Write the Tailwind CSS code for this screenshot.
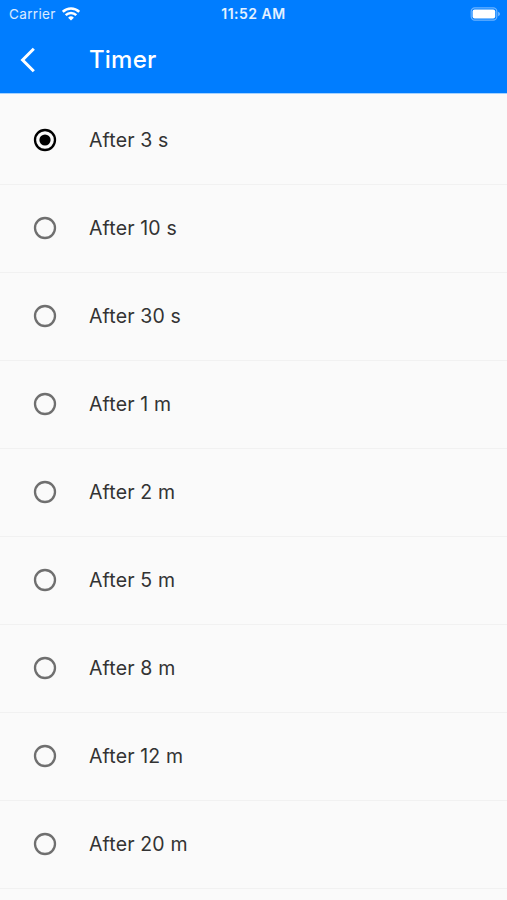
<!DOCTYPE html>
<html lang="en">
<head>
<meta charset="utf-8">
<title>Timer</title>
<script src="https://cdn.jsdelivr.net/npm/@tailwindcss/browser@4"></script>
</head>
<body class="h-[900px] w-[507px] overflow-hidden bg-[#fafafa] font-['Inter',sans-serif]">
<header class="h-[94px] bg-[#007dff] text-white border-b border-[#a5d2ff]">
  <div class="grid h-[27px] grid-cols-3 items-center pl-[9px] pr-[7px]">
    <div class="flex items-center gap-[6px]">
      <span class="pt-px text-[13.5px] leading-[26px] tracking-[0.35px] text-white/85">Carrier</span>
      <svg class="h-[14px] w-[18px]" viewBox="0 0 18 14" fill="none" stroke="white" stroke-width="2.5"><path d="M.8 4.8a11.8 11.8 0 0 1 16.4 0M3.7 8.2a7.6 7.6 0 0 1 10.6 0"/><path d="M9 13.6 6.1 10.7a4.2 4.2 0 0 1 5.8 0Z" fill="white" stroke="none"/></svg>
    </div>
    <span class="pr-[2px] pt-px text-center text-[14px] font-semibold leading-[26px] tracking-[0.5px] text-white/90">11:52 AM</span>
    <svg class="h-[14px] w-[30px] justify-self-end" viewBox="0 0 30 14"><rect x="1.2" y=".8" width="25.6" height="12.4" rx="3.6" fill="none" stroke="white" stroke-opacity=".42" stroke-width="1.2"/><rect x="2.6" y="2.4" width="22.6" height="9.2" rx="2" fill="white"/><path d="M28.2 4.8c2.2.9 2.2 3.5 0 4.4Z" fill="white" fill-opacity=".5"/></svg>
  </div>
  <div class="flex h-[66px] items-center pl-[20px]">
    <svg class="h-[26px] w-[16px]" viewBox="0 0 16 26" fill="none" stroke="white" stroke-width="3"><path d="M13.8 1.8 2.6 13l11.2 11.2"/></svg>
    <h1 class="ml-[53px] text-[24px] font-medium tracking-[0.2px]">Timer</h1>
  </div>
</header>
<main class="pt-[2px] text-[19.5px] tracking-[0.15px] text-[#333]">
  <div class="flex h-[89px] items-center border-b border-[#f1f1f1] pl-[33px]"><svg class="h-[24px] w-[24px]" viewBox="0 0 24 24"><circle cx="12" cy="12" r="10" fill="none" stroke="black" stroke-width="2.3"/><circle cx="12" cy="12" r="5.6" fill="black"/></svg><span class="ml-[32px] pt-[2px]">After 3 s</span></div>
  <div class="flex h-[88px] items-center border-b border-[#f1f1f1] pb-px pl-[33px]"><svg class="h-[24px] w-[24px]" viewBox="0 0 24 24"><circle cx="12" cy="12" r="10" fill="none" stroke="#6f6f6f" stroke-width="2.3"/></svg><span class="ml-[32px] pt-[2px]">After 10 s</span></div>
  <div class="flex h-[88px] items-center border-b border-[#f1f1f1] pb-px pl-[33px]"><svg class="h-[24px] w-[24px]" viewBox="0 0 24 24"><circle cx="12" cy="12" r="10" fill="none" stroke="#6f6f6f" stroke-width="2.3"/></svg><span class="ml-[32px] pt-[2px]">After 30 s</span></div>
  <div class="flex h-[88px] items-center border-b border-[#f1f1f1] pb-px pl-[33px]"><svg class="h-[24px] w-[24px]" viewBox="0 0 24 24"><circle cx="12" cy="12" r="10" fill="none" stroke="#6f6f6f" stroke-width="2.3"/></svg><span class="ml-[32px] pt-[2px]">After 1 m</span></div>
  <div class="flex h-[88px] items-center border-b border-[#f1f1f1] pb-px pl-[33px]"><svg class="h-[24px] w-[24px]" viewBox="0 0 24 24"><circle cx="12" cy="12" r="10" fill="none" stroke="#6f6f6f" stroke-width="2.3"/></svg><span class="ml-[32px] pt-[2px]">After 2 m</span></div>
  <div class="flex h-[88px] items-center border-b border-[#f1f1f1] pb-px pl-[33px]"><svg class="h-[24px] w-[24px]" viewBox="0 0 24 24"><circle cx="12" cy="12" r="10" fill="none" stroke="#6f6f6f" stroke-width="2.3"/></svg><span class="ml-[32px] pt-[2px]">After 5 m</span></div>
  <div class="flex h-[88px] items-center border-b border-[#f1f1f1] pb-px pl-[33px]"><svg class="h-[24px] w-[24px]" viewBox="0 0 24 24"><circle cx="12" cy="12" r="10" fill="none" stroke="#6f6f6f" stroke-width="2.3"/></svg><span class="ml-[32px] pt-[2px]">After 8 m</span></div>
  <div class="flex h-[88px] items-center border-b border-[#f1f1f1] pb-px pl-[33px]"><svg class="h-[24px] w-[24px]" viewBox="0 0 24 24"><circle cx="12" cy="12" r="10" fill="none" stroke="#6f6f6f" stroke-width="2.3"/></svg><span class="ml-[32px] pt-[2px]">After 12 m</span></div>
  <div class="flex h-[88px] items-center border-b border-[#f1f1f1] pb-px pl-[33px]"><svg class="h-[24px] w-[24px]" viewBox="0 0 24 24"><circle cx="12" cy="12" r="10" fill="none" stroke="#6f6f6f" stroke-width="2.3"/></svg><span class="ml-[32px] pt-[2px]">After 20 m</span></div>
</main>
</body>
</html>
